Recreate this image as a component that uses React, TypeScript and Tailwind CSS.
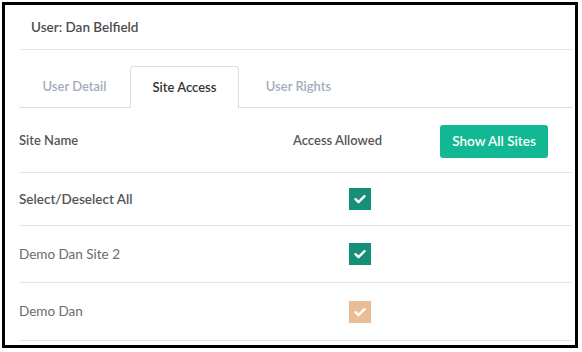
import React from "react";

const font = { fontFamily: "Lato, 'Open Sans', sans-serif" };

function Check({ color }: { color: string }) {
    return (
        <span className={`flex h-[22px] w-[22px] items-center justify-center ${color}`}>
            <svg width="12" height="10" viewBox="0 0 12 10" fill="none">
                <path d="M1.5 5.2l3 3 6-6" stroke="white" strokeWidth="2.4" strokeLinecap="round" strokeLinejoin="round" />
            </svg>
        </span>
    );
}

export default function App() {
    const rows = [
        { name: "Select/Deselect All", bold: true, color: "bg-[#168f78]", h: "h-[53px]" },
        { name: "Demo Dan Site 2", bold: false, color: "bg-[#168f78]", h: "h-[57px]" },
        { name: "Demo Dan", bold: false, color: "bg-[#e9be94]", h: "h-[58px]" },
    ];

    return (
        <div className="w-[582px] h-[352px] bg-white p-[2px]" style={font}>
            <div className="w-[576px] h-[346px] border-[3px] border-black bg-white overflow-hidden">
                {/* Header */}
                <div className="ml-[15px] mr-[2px] h-[45px] flex items-center border-b border-[#e6e6e6] pl-[11px] pt-[1px]">
                    <span className="text-[13.5px] font-semibold text-[#4d4d4d]">User: Dan Belfield</span>
                </div>

                {/* Tabs */}
                <div className="ml-[14px] mr-[2px] mt-[16px] flex border-b border-[#dedede] text-[13px] font-semibold">
                    <div className="w-[111px] h-[41px] flex items-center justify-center pt-px text-[#a4acbb]">User Detail</div>
                    <div className="w-[109px] h-[42px] -mb-px flex items-center justify-center border border-b-0 border-[#dedede] rounded-t-[4px] bg-white text-[#333]">
                        Site Access
                    </div>
                    <div className="w-[119px] h-[41px] flex items-center justify-center pt-px text-[#a4acbb]">User Rights</div>
                </div>

                {/* Table */}
                <div className="ml-[14px] mr-[3px]">
                    <div className="h-[65px] flex items-center pt-[2px] border-b border-[#e4e4e4] text-[13px] font-semibold text-[#555]">
                        <div className="w-[274px]">Site Name</div>
                        <div className="w-[147px]">Access Allowed</div>
                        <button className="w-[108px] h-[33px] rounded-[3px] bg-[#12b894] text-white text-[13.5px] font-semibold">
                            Show All Sites
                        </button>
                    </div>
                    {rows.map((r) => (
                        <div key={r.name} className={`${r.h} flex items-center border-b border-[#e4e4e4] text-[13.5px]`}>
                            <div className={`w-[274px] ${r.bold ? "font-semibold text-[#555]" : "text-[#6b6b6b]"}`}>{r.name}</div>
                            <div className="pl-[56px]">
                                <Check color={r.color} />
                            </div>
                        </div>
                    ))}
                </div>
            </div>
        </div>
    );
}
